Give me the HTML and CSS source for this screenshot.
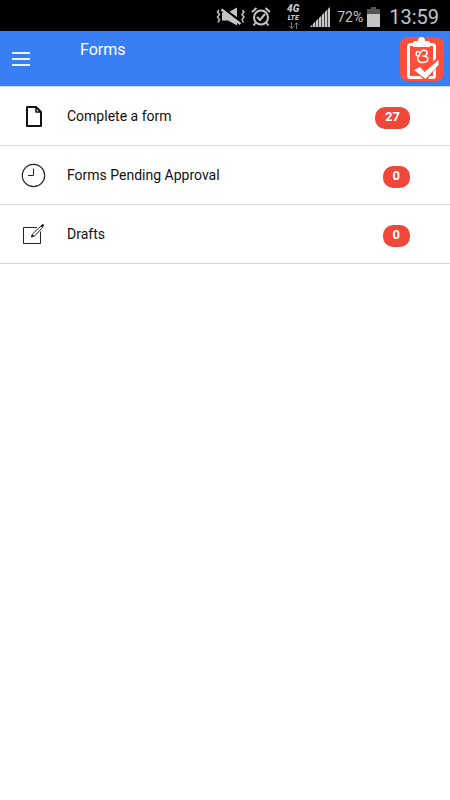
FILE: index.html
```html
<!DOCTYPE html>
<html lang="en">
<head>
<meta charset="utf-8">
<meta name="viewport" content="width=device-width, initial-scale=1">
<title>Forms</title>
<link rel="stylesheet" href="styles.css">
</head>
<body>
<div class="status">
  <svg class="status-mute" width="30" height="20" viewBox="0 0 30 20" fill="none" stroke="#c4c4c4" stroke-width="1.5">
    <path d="M3 3l-1.500 2 2 2.500-2 2.500 2 2.500-1.500 3M26.500 3l1.500 2-2 2.500 2 2.500-2 2.500 1.500 3"/>
    <path d="M6 5.500h6l9-5v18l-9-5H6z" fill="#c4c4c4" stroke="none"/>
    <path d="M6 1l19 14" stroke="#000" stroke-width="3"/>
    <path d="M5.500 2.500l19 14.500" stroke-width="2.500"/>
  </svg>
  <svg class="status-alarm" width="20" height="20" viewBox="0 0 20 20" fill="none" stroke="#c4c4c4" stroke-width="2">
    <circle cx="10" cy="10.500" r="7"/>
    <path d="M1 5L5.500 1M19 5L14.500 1M4.500 16L2.500 18.500M15.500 16l2 2.500"/>
    <path d="M6 10l3 3 5-6"/>
  </svg>
  <div class="network">
    <span class="network-gen">4G</span>
    <span class="network-lte">LTE</span>
    <svg width="11" height="7" viewBox="0 0 11 7" fill="none" stroke="#777"><path d="M3.500 0v6M1 4l2.500 2.500L6 4M8.500 7V1M6.500 3l2-2.500 2 2.500"/></svg>
  </div>
  <svg class="status-signal" width="20" height="20" viewBox="0 0 20 20">
    <path d="M0 20L20 0v20z" fill="#4a4a4a"/>
    <path d="M0 20l2-2v2zM3 20v-3l2-2v5zM6 20v-6l2-2v8zM9 20v-9l2-2v11zM12 20V8l2-2v14zM15 20V5l2-2v17zM18 20V2l2-2v20z" fill="#c8c8c8"/>
  </svg>
  <span class="percent">72%</span>
  <svg class="status-battery" width="13" height="20" viewBox="0 0 13 20">
    <path d="M4 0h5v2h4v18H0V2h4z" fill="#555"/>
    <path d="M0 7h13v13H0z" fill="#c4c4c4"/>
  </svg>
  <time class="clock">13:59</time>
</div>
<header class="bar">
  <button class="menu" type="button" aria-label="Menu">
    <svg width="18" height="14" viewBox="0 0 18 14" fill="#fff"><path d="M0 0h18v2H0zM0 6h18v2H0zM0 12h18v2H0z" fill-opacity=".9"/></svg>
  </button>
  <h1 class="title">Forms</h1>
  <svg class="logo" width="44" height="44" viewBox="0 0 44 44" fill="none">
    <rect width="44" height="44" rx="8" fill="#ff4f3b"/>
    <rect x="8.500" y="7.500" width="26" height="33" rx="2" stroke="#fff" stroke-width="3"/>
    <path d="M13 10V6q0-2 2-2h3q0-4 3.500-4T25 4h3q2 0 2 2v4z" fill="#fff"/>
    <path d="M16 17.500c0-4 4-3.500 4-1s-3.500 3-4 1M20.500 15.500c1.500-3.500 6.500-2.500 6.500.5 0 2.500-2 3-4.500 3 7.500-.5 7 6.500 0 6.500-5.500 0-6-6-3-6.500" stroke="#fff" stroke-width="1.500"/>
    <path d="M13 32l7-4 4 4L37 21l5 2-15 20h-3z" fill="#ff4f3b"/>
    <path d="M14 33l6-3 4.500 5L38.500 23v5L25.500 42z" fill="#fff"/>
  </svg>
</header>
<main>
  <ul class="list">
    <li><a class="row" href="#">
      <svg class="icon" width="26" height="26" viewBox="0 0 26 26" fill="none" stroke="#111" stroke-width="2" stroke-linejoin="round">
        <path d="M7 4h9l5 5v14H7z"/><path d="M16 4v5h5" stroke-width="1.500"/>
      </svg>
      <span class="label">Complete a form</span><span class="badge">27</span>
    </a></li>
    <li><a class="row" href="#">
      <svg class="icon" width="26" height="26" viewBox="0 0 26 26" fill="none" stroke="#222">
        <circle cx="13.500" cy="13.500" r="11.200" stroke-width="1.200"/><path d="M13.500 6.500v7H8"/>
      </svg>
      <span class="label">Forms Pending Approval</span><span class="badge">0</span>
    </a></li>
    <li><a class="row" href="#">
      <svg class="icon" width="26" height="26" viewBox="0 0 26 26" fill="none" stroke="#222">
        <path d="M17 6.500H3.500v16h17V10.500"/>
        <path d="M11.500 16l1-3 8.500-8 1.500 1.500-8 8.500z"/><path d="M11.500 16l1-2 1 1zM21 5l1.500-1.500q1.500 0 1 1L22.500 6z" fill="#222"/>
      </svg>
      <span class="label">Drafts</span><span class="badge">0</span>
    </a></li>
  </ul>
</main>
</body>
</html>
```
FILE: styles.css
```css
* {
  box-sizing: border-box;
}

body {
  margin: 0;
  background: #fff;
  color: #111;
  font-family: Roboto, "Liberation Sans", sans-serif;
  font-size: 14px;
}

svg {
  display: block;
  flex: none;
}

.status {
  display: flex;
  align-items: center;
  justify-content: flex-end;
  height: 31px;
  padding: 2px 11px 0 0;
  background: #000;
  color: #c4c4c4;
}

.status-alarm {
  margin: 0 15px 0 5px;
}

.network {
  display: flex;
  flex-direction: column;
  align-items: center;
  width: 14px;
  margin-right: 10px;
  font-weight: 900;
  font-style: italic;
}

.network-gen {
  font-size: 10px;
  line-height: 10px;
}

.network-lte {
  font-size: 7px;
  line-height: 8px;
}

.percent {
  margin: 0 4px 0 7px;
  font-size: 14px;
}

.clock {
  margin-left: 9px;
  font-size: 20px;
}

.bar {
  display: flex;
  align-items: center;
  height: 56px;
  padding: 1px 6px 0 12px;
  border-bottom: 1px solid #c9d8f0;
  background: #387ef5;
  color: #fff;
}

.menu {
  padding: 0;
  border: 0;
  background: none;
}

.title {
  flex: 1;
  align-self: flex-start;
  margin: 7px 0 0 50px;
  font-size: 16px;
  font-weight: 400;
  line-height: 22px;
}

.list {
  margin: 0;
  padding: 0;
  list-style: none;
}

.row {
  display: flex;
  align-items: center;
  height: 59px;
  padding: 0 40px 0 20px;
  border-bottom: 1px solid #d6d6d6;
  color: #111;
  text-decoration: none;
}

.label {
  flex: 1;
  margin-left: 21px;
  line-height: 20px;
}

.badge {
  margin-top: 3px;
  padding: 0 10px 2px;
  border-radius: 10px;
  background: #ef473a;
  color: #fff;
  font-size: 13px;
  font-weight: 700;
  line-height: 20px;
}
```
